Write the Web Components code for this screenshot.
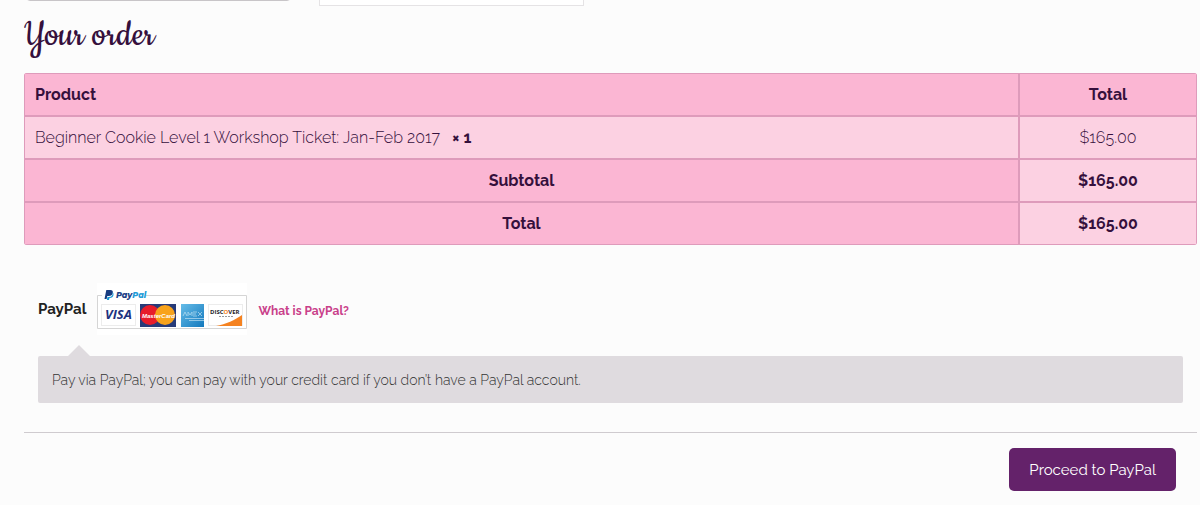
<!DOCTYPE html>
<html lang="en">
<head>
<meta charset="utf-8">
<title>Checkout</title>
<style>
body {
  margin: 0;
  background: #fcfcfc;
  color: #35103c;
  font: 16px/24px Raleway, Lato, "Open Sans", sans-serif;
}
</style>
</head>
<body>
<checkout-page>
  <billing-fields></billing-fields>
  <order-review></order-review>
  <payment-method name="PayPal">
    <card-logos slot="logos"></card-logos>
    <a slot="help" href="#what-is-paypal">What is PayPal?</a>
    Pay via PayPal; you can pay with your credit card if you don’t have a PayPal account.
  </payment-method>
  <place-order>Proceed to PayPal</place-order>
</checkout-page>

<script>
class CheckoutPage extends HTMLElement {
  constructor() {
    super();
    this.attachShadow({mode: 'open'}).innerHTML = `<style>
    :host {
      display: flex;
      flex-direction: column;
      padding: 0 3px 14px 24px;
    }
    </style>
    <slot></slot>`;
  }
}

// Tail end of the form above the order
class BillingFields extends HTMLElement {
  constructor() {
    super();
    this.attachShadow({mode: 'open'}).innerHTML = `<style>
    :host {
      display: flex;
      align-items: flex-end;
      gap: 28px;
      height: 6px;
      overflow: hidden;
    }
    input, textarea {
      box-sizing: border-box;
      width: 265px;
      height: 40px;
      margin: 0;
      border: 1px solid #e5e3e5;
      background: #fff;
      resize: none;
    }
    input {
      margin: 0 0 5px 2px;
      border-color: #c8c5c8;
      border-radius: 4px;
    }
    </style>
    <input aria-label="Postcode">
    <textarea aria-label="Order notes"></textarea>`;
  }
}

class OrderReview extends HTMLElement {
  constructor() {
    super();
    this.attachShadow({mode: 'open'}).innerHTML = `<style>
    :host { display: block; }
    h3 {
      margin: 9px 0 17px;
      font: 400 40px/41px Cookie, "Liberation Serif", serif;
    }
    table {
      width: 100%;
      border-spacing: 0;
      border-radius: 3px;
      overflow: hidden;
      text-align: center;
    }
    th, td {
      box-sizing: border-box;
      height: 43px;
      padding: 0 10px;
      border: 1px solid #de9bbb;
    }
    th {
      background: #fbb6d3;
      font-weight: 700;
    }
    td { background: #fcd1e2; }
    .name { text-align: left; }
    .amount { width: 178px; }
    tbody td { font-weight: 300; }
    tbody strong {
      margin-left: 8px;
      font-weight: 700;
    }
    tfoot td { font-weight: 700; }
    </style>
    <h3>Your order</h3>
    <table>
      <thead>
        <tr><th class="name" scope="col">Product</th><th class="amount" scope="col">Total</th></tr>
      </thead>
      <tbody>
        <tr>
          <td class="name">Beginner Cookie Level 1 Workshop Ticket: Jan-Feb 2017 <strong>× 1</strong></td>
          <td>$165.00</td>
        </tr>
      </tbody>
      <tfoot>
        <tr><th scope="row">Subtotal</th><td>$165.00</td></tr>
        <tr><th scope="row">Total</th><td>$165.00</td></tr>
      </tfoot>
    </table>`;
  }
}

class CardLogos extends HTMLElement {
  constructor() {
    super();
    this.attachShadow({mode: 'open'}).innerHTML = `<style>
    :host { display: block; }
    svg { display: block; }
    text { font-family: "Open Sans", sans-serif; font-weight: 700; font-style: italic; }
    .paypal { font-family: Montserrat, "Open Sans", sans-serif; font-weight: 800; }
    .mastercard { font-family: "Liberation Sans", sans-serif; }
    .discover { font-style: normal; }
    </style>
    <svg width="150" height="52" viewBox="0 0 150 52" role="img" aria-label="PayPal and accepted cards">
      <defs>
        <linearGradient id="amex" x2="1" y2="1">
          <stop offset="0" stop-color="#65bce8"/>
          <stop offset="1" stop-color="#1479bd"/>
        </linearGradient>
      </defs>
      <rect width="150" height="52" fill="#fff"/>
      <path d="M5 12.500H.5v33h149v-33H49" fill="none" stroke="#d5d5d5"/>
      <path d="M9.300 7h4q3 0 2.500 3-.6 3-4 3h-1.500l-.7 3H7.500z" fill="#173b80"/>
      <path d="M15.500 9q1 5-4 5h-1l-.7 3H12l.5-2q3.500 0 4-3 .3-2-1-3z" fill="#1699d6"/>
      <text class="paypal" x="19" y="15" font-size="8" fill="#1c3f86">Pay<tspan fill="#219bd7">Pal</tspan></text>
      <g fill="#fff" stroke="#ececec">
        <rect x="4.500" y="21.500" width="34" height="21"/>
        <rect x="111.500" y="21.500" width="34" height="21"/>
      </g>
      <text x="8" y="36" font-size="13" fill="#1d327f">VISA</text>
      <rect x="43" y="21" width="36" height="23" fill="#273b79"/>
      <circle cx="53" cy="32" r="10" fill="#e71d2b"/>
      <circle cx="68" cy="32" r="10" fill="#f8a31b"/>
      <text class="mastercard" x="45" y="35" font-size="6" fill="#fff">MasterCard</text>
      <rect x="84" y="21" width="23" height="23" fill="url(#amex)"/>
      <g fill="none" stroke="#d3edf9" opacity=".6">
        <path d="M86 33l2-4 2 4m1 0v-4l2 3 2-3v4m1-4h4m-4 2h3m-3 2h4m1-4l4 4m0-4l-4 4"/>
        <path d="M88 35.500h19M92 37.500h15"/>
      </g>
      <path d="M119 43c10-2 19-6 26-11v11z" fill="#f58220"/>
      <text class="discover" x="113" y="31" font-size="6" fill="#272329">DISC<tspan fill="#f58220">O</tspan>VER</text>
      <path d="M122 33.500h15" stroke="#999" stroke-dasharray="2 1"/>
    </svg>`;
  }
}

class PaymentMethod extends HTMLElement {
  constructor() {
    super();
    this.attachShadow({mode: 'open'}).innerHTML = `<style>
    :host {
      display: block;
      padding: 38px 14px 29px;
    }
    .method {
      display: flex;
      align-items: center;
      gap: 11px;
      color: #222;
      font-weight: 700;
      font-size: 15px;
    }
    ::slotted(a) {
      padding-top: 3px;
      color: #c9408a;
      font-size: 12px;
      text-decoration: none;
    }
    .box {
      position: relative;
      margin-top: 21px;
      padding: 12px 14px 11px;
      border-radius: 2px;
      background: #dfdbdf;
      color: #333;
      font-weight: 300;
      font-size: 14px;
    }
    .box::before {
      content: '';
      position: absolute;
      left: 30px;
      bottom: 100%;
      border: 11px solid transparent;
      border-top: 0;
      border-bottom-color: #dfdbdf;
    }
    </style>
    <div class="method">
      <span class="title"></span>
      <slot name="logos"></slot>
      <slot name="help"></slot>
    </div>
    <div class="box"><slot></slot></div>`;
    this.shadowRoot.querySelector('.title').textContent = this.getAttribute('name');
  }
}

class PlaceOrder extends HTMLElement {
  constructor() {
    super();
    this.attachShadow({mode: 'open'}).innerHTML = `<style>
    :host {
      display: flex;
      justify-content: flex-end;
      padding: 15px 21px 0;
      border-top: 1px solid #cfcbcf;
    }
    button {
      height: 43px;
      padding: 0 20px;
      border: 0;
      border-radius: 5px;
      background: #64226a;
      color: #fff;
      font: inherit;
      font-size: 15px;
    }
    </style>
    <button type="submit"><slot></slot></button>`;
  }
}

customElements.define('checkout-page', CheckoutPage);
customElements.define('billing-fields', BillingFields);
customElements.define('order-review', OrderReview);
customElements.define('card-logos', CardLogos);
customElements.define('payment-method', PaymentMethod);
customElements.define('place-order', PlaceOrder);
</script>
</body>
</html>
